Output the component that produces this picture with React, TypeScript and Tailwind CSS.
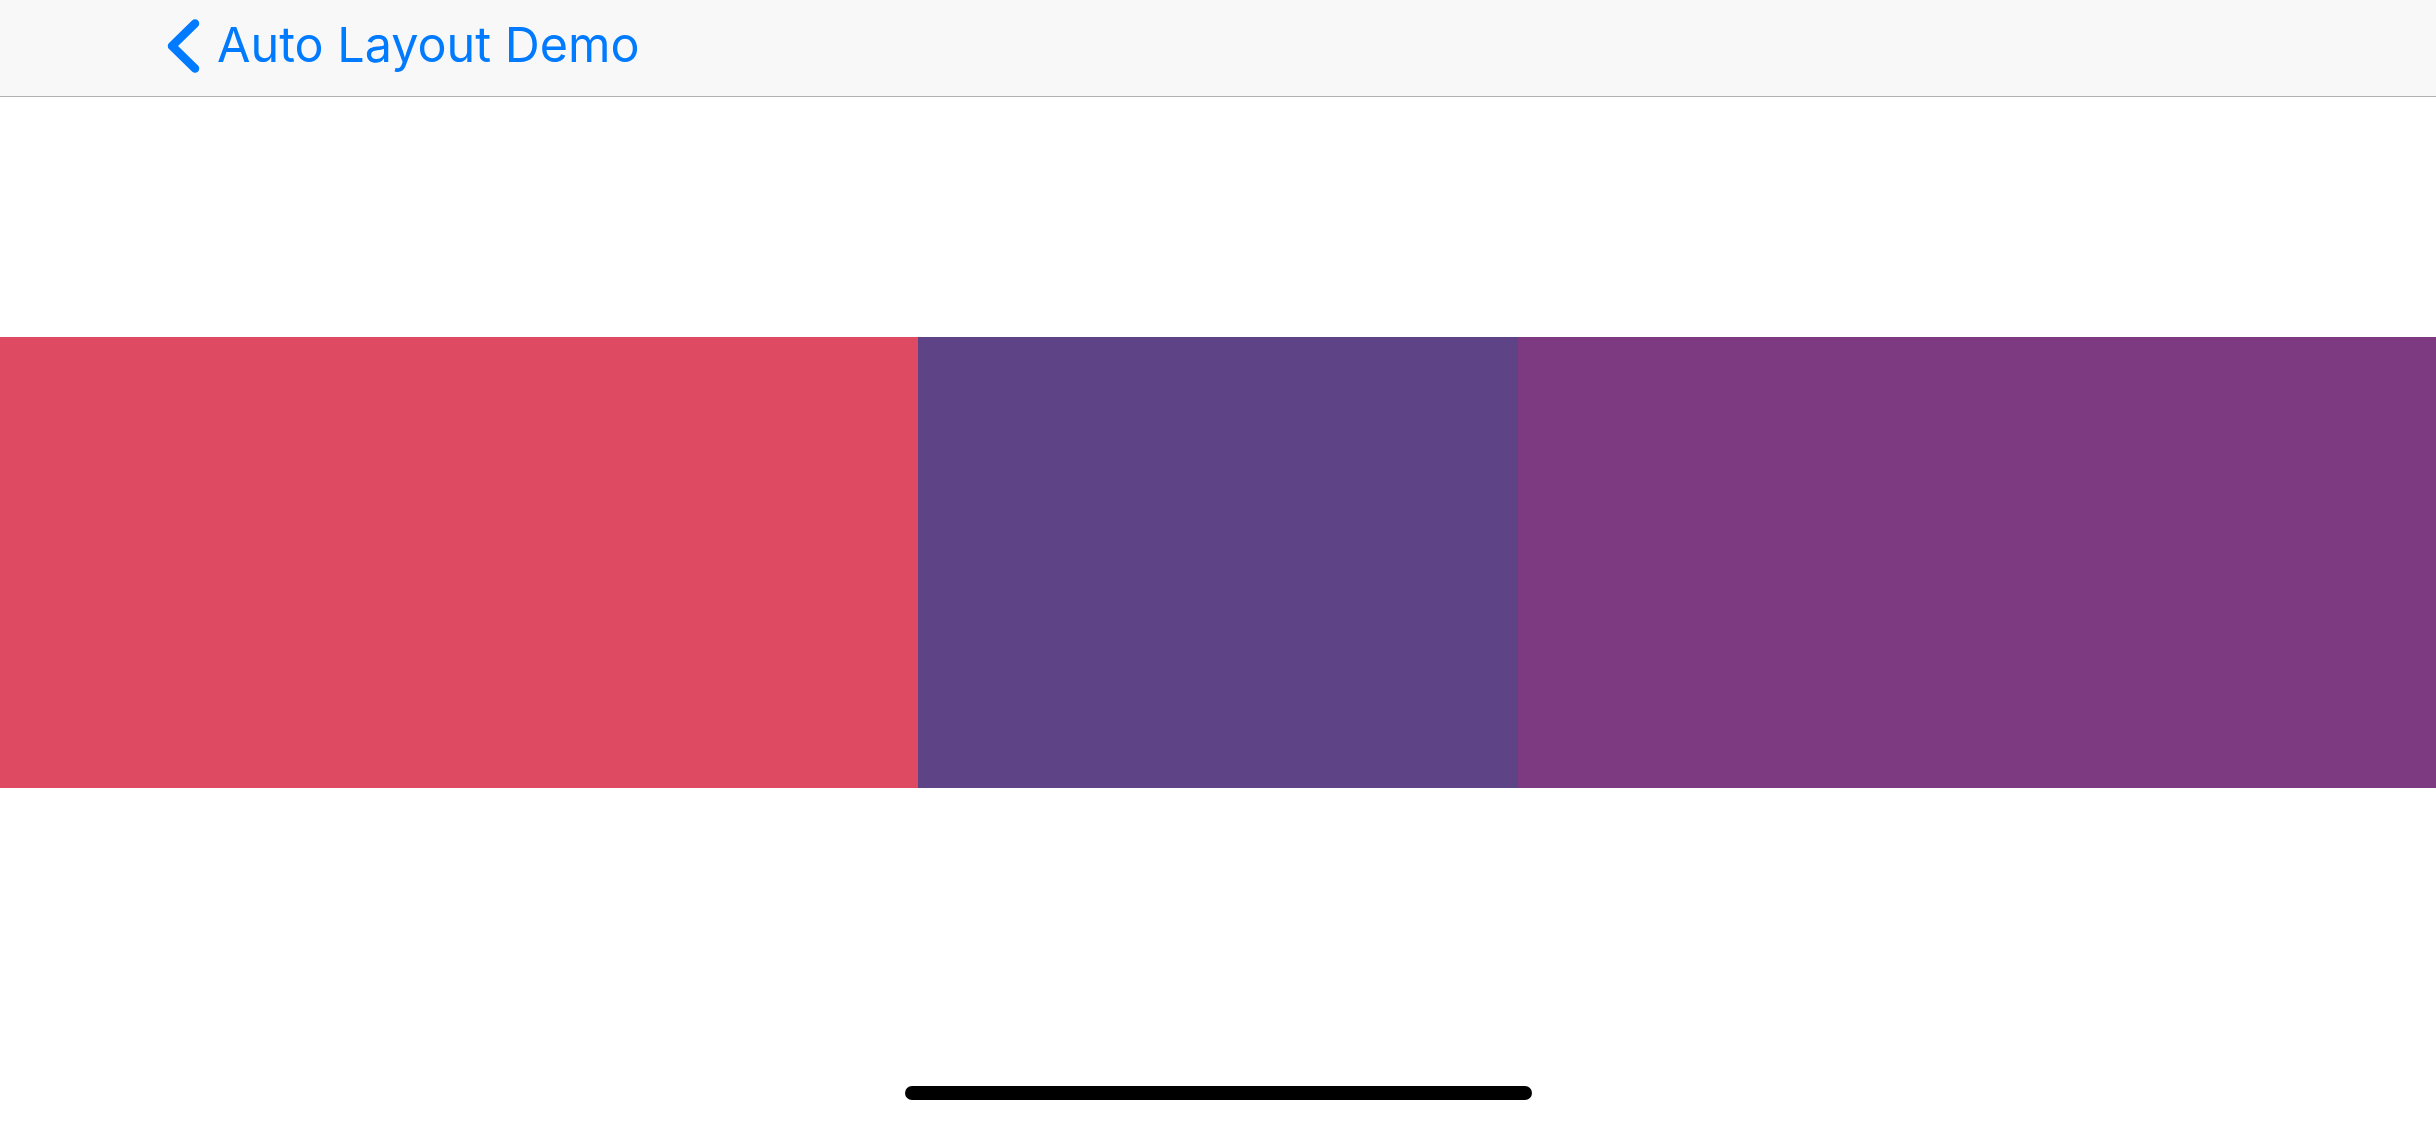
import React from 'react';

const App: React.FC = () => {
  return (
    <div className="w-[2436px] h-[1125px] bg-white flex flex-col overflow-hidden" style={{ fontFamily: 'Inter, "Noto Sans", sans-serif' }}>
      {/* navigation bar */}
      <div className="h-[97px] bg-[#f8f8f8] border-b border-[#b2b2b2] flex items-center pl-[163px] shrink-0">
        <div className="flex items-center gap-[14px] text-[#007aff] -mt-[5px]">
          <svg width="40" height="60" viewBox="0 0 40 60">
            <polyline points="32,7.5 9,30 32,52.5" fill="none" stroke="#007aff" strokeWidth="8.5" strokeLinecap="round" strokeLinejoin="round" />
          </svg>
          <span className="text-[48.5px] leading-none">Auto Layout Demo</span>
        </div>
      </div>

      {/* content */}
      <div className="flex-1 flex flex-col">
        <div className="h-[240px]" />
        <div className="flex h-[451px]">
          <div className="w-[918px] bg-[#de4a62]" />
          <div className="w-[600px] bg-[#5e4486]" />
          <div className="flex-1 bg-[#7d3a80]" />
        </div>
        <div className="flex-1 flex items-end justify-center pb-[25px]">
          <div className="w-[627px] h-[14px] rounded-full bg-black" />
        </div>
      </div>
    </div>
  );
};

export default App;
